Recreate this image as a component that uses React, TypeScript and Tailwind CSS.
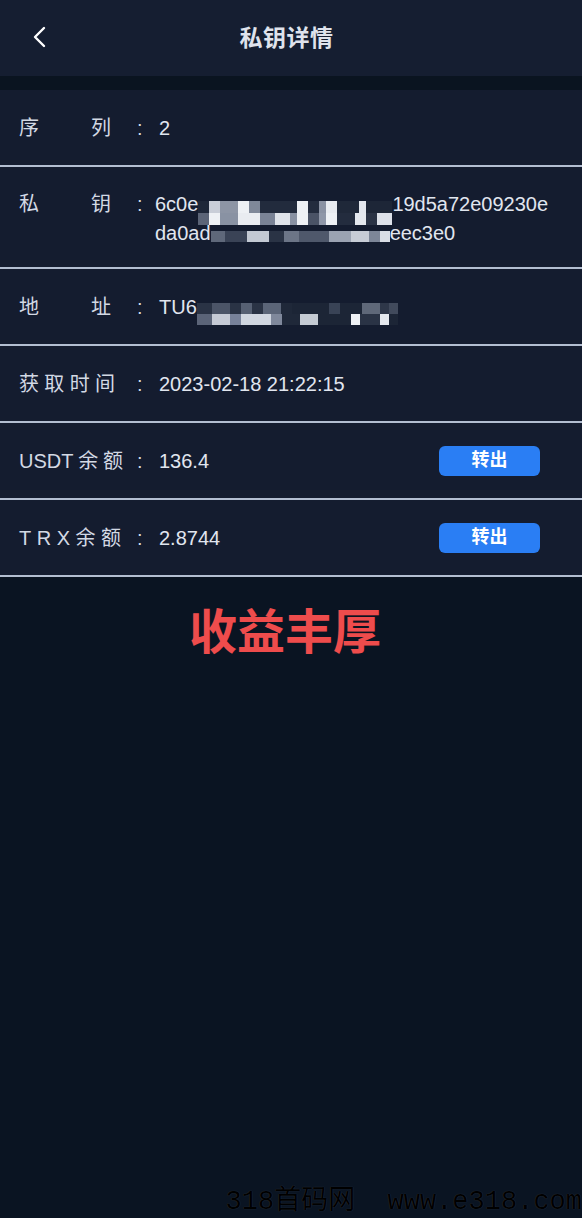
import React from "react";

type Cell = [number, string];

const sans = "font-['Liberation_Sans','Noto_Sans_CJK_SC',sans-serif]";

function Mosaic({ rows, h }: { rows: Cell[][]; h: number }) {
  return (
    <span className="inline-flex flex-col">
      {rows.map((row, i) => (
        <span key={i} className="flex">
          {row.map(([w, c], j) => (
            <span key={j} style={{ width: w, height: h, background: c }} />
          ))}
        </span>
      ))}
    </span>
  );
}

const keyTop: Cell[][] = [
  [[11, "#1e2739"], [11, "#c9ced8"], [18, "#8d95a5"], [11, "#eef1f5"], [11, "#7f8899"], [37, "#222b3d"], [11, "#eef1f5"], [11, "#232c3e"], [7, "#8a92a3"], [11, "#e8ebf0"], [22, "#1f2839"], [7, "#e3e7ee"], [26, "#1d2637"]],
  [[11, "#5b6477"], [11, "#eef1f5"], [18, "#8992a3"], [22, "#e9ecf1"], [15, "#7a8396"], [15, "#dfe3ea"], [7, "#8891a2"], [11, "#eef1f5"], [11, "#4a5366"], [7, "#8f97a8"], [11, "#eef1f5"], [18, "#232c3e"], [11, "#e4e8ee"], [11, "#2a3345"], [15, "#dde1e9"]],
];

const keyBottom: Cell[][] = [
  [[14, "#5f687a"], [22, "#3a4356"], [22, "#c3c9d3"], [15, "#2a3345"], [15, "#6c7587"], [30, "#4f586b"], [22, "#9ba3b2"], [18, "#c7ccd6"], [11, "#7d8698"], [10, "#d9dde5"]],
];

const addr: Cell[][] = [
  [[15, "#2a3345"], [18, "#4b5467"], [11, "#2a3345"], [11, "#566073"], [11, "#2a3345"], [18, "#5b6578"], [11, "#1f2839"], [37, "#1c2536"], [11, "#394356"], [22, "#1c2536"], [18, "#5f6879"], [9, "#2e3749"], [9, "#414a5c"]],
  [[15, "#5b6478"], [18, "#c5cad5"], [11, "#78829a"], [30, "#d0d6e0"], [11, "#7f889b"], [18, "#1f2839"], [18, "#c4cad3"], [33, "#1c2536"], [9, "#eef1f5"], [20, "#2a3345"], [9, "#e4e8ee"], [9, "#1c2536"]],
];

function Label({ parts, width }: { parts: string[]; width: number }) {
  return (
    <div className="w-[118px] shrink-0">
      <div className="flex justify-between text-[#d3d9e4]" style={{ width }}>
        {parts.map((p, i) => (
          <span key={i}>{p}</span>
        ))}
      </div>
    </div>
  );
}

function Divider() {
  return <div className="h-[2px] bg-[#b3bed1]" />;
}

function Row({
  parts,
  width,
  children,
  action,
}: {
  parts: string[];
  width: number;
  children: React.ReactNode;
  action?: boolean;
}) {
  return (
    <>
      <div className="h-[75px] flex items-center pl-[19px] pr-[42px]">
        <Label parts={parts} width={width} />
        <span className="w-[22px] shrink-0 text-[#d3d9e4]">:</span>
        <div className="text-[#e1e6ef] whitespace-nowrap">{children}</div>
        {action && (
          <button className="ml-auto w-[101px] h-[30px] rounded-[6px] bg-[#2a7ef4] text-white text-[18px] font-bold flex items-center justify-center">
            转出
          </button>
        )}
      </div>
      <Divider />
    </>
  );
}

export default function App() {
  return (
    <main
      className={`${sans} w-[582px] min-h-[1218px] bg-[#0a1422] flex flex-col text-[20px] overflow-hidden`}
    >
      <header className="h-[76px] bg-[#151e31] relative flex items-center justify-center pr-[9px]">
        <svg
          className="absolute left-[32px] top-[26px]"
          width="16"
          height="22"
          viewBox="0 0 16 22"
          fill="none"
        >
          <polyline
            points="12,2 3,11 12,20"
            stroke="#ffffff"
            strokeWidth="2.4"
            strokeLinecap="round"
            strokeLinejoin="round"
          />
        </svg>
        <h1 className="text-[23px] font-bold text-[#dfe3ec] tracking-[0.5px]">
          私钥详情
        </h1>
      </header>
      <div className="h-[14px] bg-[#0a1420]" />

      <section className="bg-[#141c2f]">
        <Row parts={["序", "列"]} width={92}>
          2
        </Row>

        <div className="h-[100px] flex items-start pt-[23px] pl-[19px] pr-[20px] leading-[29px]">
          <Label parts={["私", "钥"]} width={92} />
          <span className="w-[18px] shrink-0 text-[#d3d9e4]">:</span>
          <div className="text-[#e1e6ef] whitespace-nowrap">
            <div className="h-[29px] flex items-center">
              <span>6c0e</span>
              <span className="translate-y-[4px]">
                <Mosaic rows={keyTop} h={12} />
              </span>
              <span>19d5a72e09230e</span>
            </div>
            <div className="h-[29px] flex items-center">
              <span>da0ad</span>
              <span className="translate-y-[2px]">
                <Mosaic rows={keyBottom} h={11} />
              </span>
              <span>eec3e0</span>
            </div>
          </div>
        </div>
        <Divider />

        <Row parts={["地", "址"]} width={92}>
          <span className="flex items-center h-[29px]">
            <span>TU6</span>
            <span className="translate-y-[2px]">
              <Mosaic rows={addr} h={11} />
            </span>
          </span>
        </Row>

        <Row parts={["获", "取", "时", "间"]} width={96}>
          2023-02-18 21:22:15
        </Row>

        <Row parts={["USDT", "余", "额"]} width={104} action>
          136.4
        </Row>

        <Row parts={["T", "R", "X", "余", "额"]} width={102} action>
          2.8744
        </Row>
      </section>

      <p className="mt-[32px] text-center text-[48px] leading-[48px] font-bold text-[#ee4c4c] pr-[12px]">
        收益丰厚
      </p>

      <div className="mt-auto flex justify-end pb-[1px]">
        <span className="font-['Liberation_Mono','Noto_Sans_CJK_SC',monospace] text-[27px] leading-[30px] text-black whitespace-pre [text-shadow:0_0_1px_rgba(255,255,255,0.2)]">
          318首码网  www.e318.com
        </span>
      </div>
    </main>
  );
}
